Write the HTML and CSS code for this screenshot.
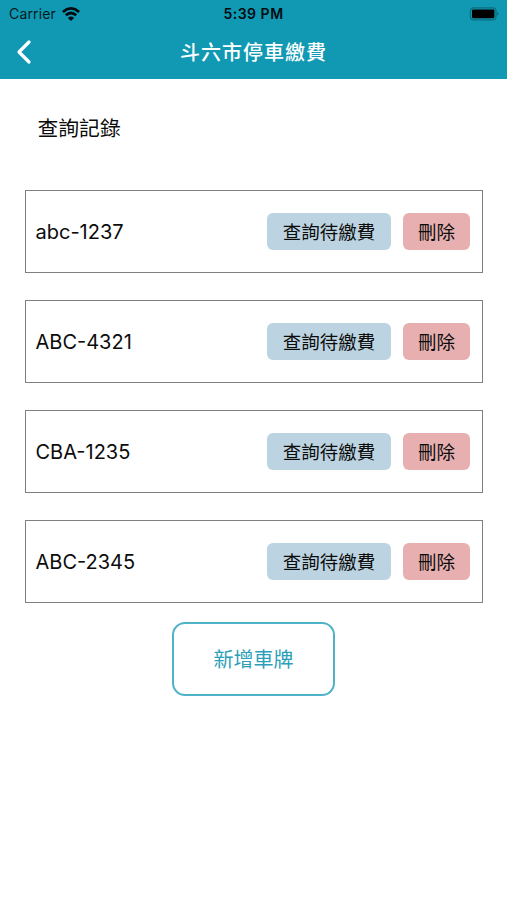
FILE: index.html
```
<!DOCTYPE html>
<html lang="zh-Hant">
<head>
    <meta charset="UTF-8">
    <meta name="viewport" content="width=device-width, initial-scale=1.0">
    <title>斗六市停車繳費</title>
    <link rel="stylesheet" href="styles.css">
</head>
<body>

    <!-- Header -->
    <header>
        <div class="status-bar">
            <div class="carrier">
                <span>Carrier</span>
                <svg class="wifi" width="18" height="14" viewBox="0 0 18 14" fill="none" stroke="#020c0f" stroke-width="2.7">
                    <path d="M0.9 5 Q9 -2.2 17.1 5"/>
                    <path d="M3.8 8.3 Q9 3.7 14.2 8.3"/>
                    <path d="M9 13.9 L5.9 10.9 Q9 8.3 12.1 10.9 Z" fill="#020c0f" stroke="none"/>
                </svg>
            </div>
            <div class="time">5:39 PM</div>
            <div class="battery">
                <svg width="31" height="14" viewBox="0 0 31 14">
                    <rect x="1.4" y="0.8" width="25.6" height="12" rx="3.4" fill="none" stroke="#0b6d80" stroke-width="1.2"/>
                    <rect x="3" y="2.4" width="22.4" height="8.8" rx="1.2" fill="#000"/>
                    <path d="M28 4.6 Q31 6.8 28 9 Z" fill="#0b6d80"/>
                </svg>
            </div>
        </div>
        <div class="nav-bar">
            <a href="#" class="back">
                <svg width="16" height="26" viewBox="0 0 16 26" fill="none" stroke="#fff" stroke-width="3.2" stroke-linecap="round" stroke-linejoin="round">
                    <path d="M13 3 L3 13 L13 23"/>
                </svg>
            </a>
            <h1>斗六市停車繳費</h1>
        </div>
    </header>

    <!-- Plate Records -->
    <main>
        <h2>查詢記錄</h2>

        <ul class="records">
            <li>
                <span class="plate">abc-1237</span>
                <button class="btn query-btn">查詢待繳費</button>
                <button class="btn delete-btn">刪除</button>
            </li>
            <li>
                <span class="plate">ABC-4321</span>
                <button class="btn query-btn">查詢待繳費</button>
                <button class="btn delete-btn">刪除</button>
            </li>
            <li>
                <span class="plate">CBA-1235</span>
                <button class="btn query-btn">查詢待繳費</button>
                <button class="btn delete-btn">刪除</button>
            </li>
            <li>
                <span class="plate">ABC-2345</span>
                <button class="btn query-btn">查詢待繳費</button>
                <button class="btn delete-btn">刪除</button>
            </li>
        </ul>

        <button class="add-btn">新增車牌</button>
    </main>

</body>
</html>
```
FILE: styles.css
```
/* General Styles */
* {
    box-sizing: border-box;
}

body {
    margin: 0;
    font-family: Inter, 'Noto Sans CJK TC', sans-serif;
    background-color: #fff;
    color: #0c0c0c;
}

button {
    padding: 0;
    font-family: inherit;
    cursor: pointer;
}

/* Header */
header {
    height: 79px;
    background-color: #1199b3;
}

.status-bar {
    display: grid;
    grid-template-columns: 1fr auto 1fr;
    align-items: center;
    height: 27px;
    padding: 0 7px 0 9px;
    color: #04191e;
    font-size: 14px;
}

.carrier {
    display: flex;
    align-items: center;
    gap: 6px;
    letter-spacing: 0.15px;
}

.time {
    margin-right: 2px;
    color: #020c0f;
    font-weight: 600;
    letter-spacing: 0.5px;
}

.battery {
    display: flex;
    justify-content: flex-end;
}

.nav-bar {
    display: grid;
    grid-template-columns: 1fr auto 1fr;
    align-items: center;
    height: 50px;
    padding: 0 15px;
}

.back {
    display: flex;
    padding-left: 1px;
}

h1 {
    margin: -2px 0 0;
    color: #fff;
    font-size: 20px;
    font-weight: 500;
    letter-spacing: 1px;
}

/* Plate Records */
main {
    padding: 0 24px 0 25px;
}

h2 {
    margin: 0;
    padding: 35px 0 0 12.5px;
    height: 111px;
    font-size: 20.8px;
    font-weight: 400;
    line-height: 30px;
}

.records {
    list-style: none;
    margin: 0;
    padding: 0;
}

.records li {
    display: flex;
    align-items: center;
    height: 83px;
    margin-bottom: 27px;
    padding: 0 12px 0 9.5px;
    border: 1px solid #808080;
}

.plate {
    flex: 1;
    padding-top: 1px;
    font-size: 20px;
}

.btn {
    height: 37px;
    border: none;
    border-radius: 6px;
    padding-bottom: 1px;
    color: #0c0c0c;
    font-size: 18.5px;
}

.query-btn {
    width: 124px;
    background-color: #bcd4e1;
}

.delete-btn {
    width: 67px;
    margin-left: 12px;
    background-color: #e7afaf;
}

.add-btn {
    display: block;
    width: 163px;
    height: 74px;
    margin: -8px 0 0 147px;
    padding-bottom: 2px;
    border: 2px solid #4fb3c8;
    border-radius: 13px;
    background: #fff;
    color: #2ba0b8;
    font-size: 20px;
}
```
